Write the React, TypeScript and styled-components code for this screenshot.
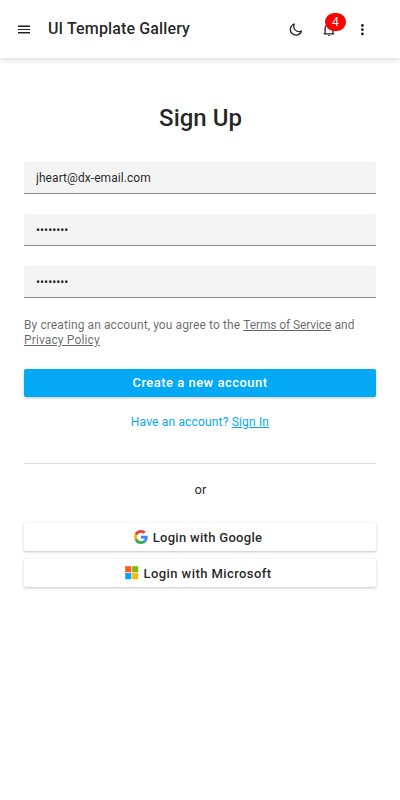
import React from 'react';
import styled, { createGlobalStyle } from 'styled-components';

const GlobalStyle = createGlobalStyle`
  *, *::before, *::after { box-sizing: border-box; }
  body {
    margin: 0;
    background: #fff;
    color: rgba(0, 0, 0, 0.87);
    font-family: Roboto, sans-serif;
    font-size: 12px;
  }
`;

const Page = styled.div`
  min-height: 800px;
`;

const Header = styled.header`
  display: flex;
  align-items: center;
  height: 58px;
  padding: 0 21px 0 7px;
  background: #fff;
  box-shadow: 0 2px 6px rgba(0, 0, 0, 0.14);
`;

const IconButton = styled.button`
  position: relative;
  display: flex;
  align-items: center;
  justify-content: center;
  width: 33.3px;
  height: 34px;
  margin-top: 1px;
  padding: 0;
  border: 0;
  background: none;
  color: #212121;
`;

const Title = styled.h1`
  flex: 1;
  margin: 0 0 1px 7.7px;
  font-size: 16px;
  font-weight: 500;
  letter-spacing: 0.13px;
  line-height: 20px;
`;

const Badge = styled.span`
  position: absolute;
  top: 0;
  left: 13px;
  width: 21px;
  height: 18px;
  padding-right: 1px;
  border-radius: 9px;
  background: #f00;
  color: #fff;
  font: 12px/18px "Noto Sans", sans-serif;
  text-align: center;
`;

const Form = styled.form`
  display: flex;
  flex-direction: column;
  padding: 44px 24px 0;
`;

const Heading = styled.h2`
  margin: 0 0 28px;
  padding-left: 1px;
  font-size: 24px;
  font-weight: 500;
  line-height: 32px;
  text-align: center;
`;

const Field = styled.input`
  height: 32px;
  margin: 0 0 20px;
  padding: 0 12px;
  border: 0;
  border-bottom: 1px solid #8c8c8c;
  border-radius: 2px 2px 0 0;
  outline: 0;
  background: #f4f4f4;
  color: rgba(0, 0, 0, 0.87);
  font: 12px Roboto, sans-serif;
  letter-spacing: ${(p) => (p.type === 'password' ? '0' : '0.07px')};
`;

const Terms = styled.p`
  margin: 0 0 21px;
  color: rgba(0, 0, 0, 0.6);
  letter-spacing: 0.09px;
  line-height: 15px;
`;

const Link = styled.a<{ $spacing?: number }>`
  color: inherit;
  letter-spacing: ${(p) => (p.$spacing === undefined ? 'inherit' : `${p.$spacing}px`)};
  text-decoration: underline;
`;

const Button = styled.button<{ $primary?: boolean; $spacing: number }>`
  display: flex;
  align-items: center;
  justify-content: center;
  height: 28px;
  padding: 0;
  border: 0;
  border-radius: 2px;
  background: ${(p) => (p.$primary ? '#03a9f4' : '#fff')};
  color: ${(p) => (p.$primary ? '#fff' : 'rgba(0, 0, 0, 0.87)')};
  box-shadow: 0 1px 3px rgba(0, 0, 0, 0.24);
  font: 500 13px/16px Roboto, sans-serif;
  letter-spacing: ${(p) => p.$spacing}px;
`;

const SignIn = styled.p`
  margin: 17px 0 0;
  color: #03a9f4;
  letter-spacing: 0.17px;
  line-height: 16px;
  text-align: center;
`;

const Divider = styled.hr`
  width: 100%;
  margin: 33px 0 18px;
  border: 0;
  border-top: 1px solid #e0e0e0;
`;

const Or = styled.p`
  margin: 0 0 25px;
  padding-left: 1px;
  font-size: 13px;
  line-height: 16px;
  text-align: center;
`;

const Logins = styled.div`
  display: grid;
  gap: 8px;
`;

const LoginLabel = styled.span`
  margin: 1px 4px 0 5px;
`;

const MenuIcon = () => (
  <svg width="12" height="9" viewBox="0 0 12 9" fill="currentColor">
    <path d="M0 .6h12V2H0zM0 4h12v1H0zM0 7h12v1.4H0z" />
  </svg>
);

const MoonIcon = () => (
  <svg width="14" height="14" viewBox="0 0 14 14" fill="none" stroke="currentColor" strokeWidth="1.25" strokeLinejoin="round">
    <path d="M5.3 1A5.7 5.7 0 1 0 12.5 8 5.3 5.3 0 0 1 5.3 1z" />
  </svg>
);

const BellIcon = () => (
  <svg width="12" height="14" viewBox="0 0 12 14" fill="none" stroke="currentColor" strokeWidth="1.3">
    <path d="M2.1 10.6V5.4a3.9 3.9 0 0 1 7.8 0v5.2M.7 10.9h10.6" />
    <path d="M4.6 12h2.8L6 13.3z" fill="currentColor" stroke="none" />
  </svg>
);

const DotsIcon = () => (
  <svg width="4" height="12" viewBox="0 0 4 12" fill="currentColor">
    <circle cx="2.4" cy="1.5" r="1.4" />
    <circle cx="2.4" cy="5.7" r="1.4" />
    <circle cx="2.4" cy="9.9" r="1.4" />
  </svg>
);

const GoogleIcon = () => (
  <svg width="14" height="14" viewBox="0 0 48 48">
    <path fill="#EA4335" d="M24 9.5c3.54 0 6.71 1.22 9.21 3.6l6.85-6.85C35.9 2.38 30.47 0 24 0 14.62 0 6.51 5.38 2.56 13.22l7.98 6.19C12.43 13.72 17.74 9.5 24 9.5z" />
    <path fill="#4285F4" d="M46.98 24.55c0-1.57-.15-3.09-.38-4.55H24v9.02h12.94c-.58 2.96-2.26 5.48-4.78 7.18l7.73 6c4.51-4.18 7.09-10.36 7.09-17.65z" />
    <path fill="#FBBC05" d="M10.53 28.59A14.5 14.5 0 0 1 9.77 24c0-1.6.27-3.14.76-4.59l-7.98-6.19A23.9 23.9 0 0 0 0 24c0 3.88.92 7.54 2.56 10.78l7.97-6.19z" />
    <path fill="#34A853" d="M24 48c6.48 0 11.93-2.13 15.89-5.81l-7.73-6c-2.15 1.45-4.92 2.3-8.16 2.3-6.26 0-11.57-4.22-13.47-9.91l-7.98 6.19C6.51 42.62 14.62 48 24 48z" />
  </svg>
);

const MicrosoftIcon = () => (
  <svg width="14" height="14" viewBox="0 0 14 14">
    <path fill="#ff5722" d="M.2.2h6.1v6.1H.2z" />
    <path fill="#7fba00" d="M7.1.2h6.1v6.1H7.1z" />
    <path fill="#03a4f4" d="M.2 7.1h6.1v6.1H.2z" />
    <path fill="#ffb900" d="M7.1 7.1h6.1v6.1H7.1z" />
  </svg>
);

export default function App() {
  return (
    <Page>
      <GlobalStyle />
      <Header>
        <IconButton aria-label="Menu"><MenuIcon /></IconButton>
        <Title>UI Template Gallery</Title>
        <IconButton aria-label="Theme"><MoonIcon /></IconButton>
        <IconButton aria-label="Notifications">
          <BellIcon />
          <Badge>4</Badge>
        </IconButton>
        <IconButton aria-label="More"><DotsIcon /></IconButton>
      </Header>
      <Form>
        <Heading>Sign Up</Heading>
        <Field type="text" aria-label="Email" defaultValue="jheart@dx-email.com" />
        <Field type="password" aria-label="Password" defaultValue="password" />
        <Field type="password" aria-label="Confirm password" defaultValue="password" />
        <Terms>
          By creating an account, you agree to the <Link $spacing={-0.1}>Terms of Service</Link> and{' '}
          <Link $spacing={0.13}>Privacy Policy</Link>
        </Terms>
        <Button type="button" $primary $spacing={0.48}>Create a new account</Button>
        <SignIn>Have an account? <Link>Sign In</Link></SignIn>
        <Divider />
        <Or>or</Or>
        <Logins>
          <Button type="button" $spacing={0.3}><GoogleIcon /><LoginLabel>Login with Google</LoginLabel></Button>
          <Button type="button" $spacing={0.42}><MicrosoftIcon /><LoginLabel>Login with Microsoft</LoginLabel></Button>
        </Logins>
      </Form>
    </Page>
  );
}
